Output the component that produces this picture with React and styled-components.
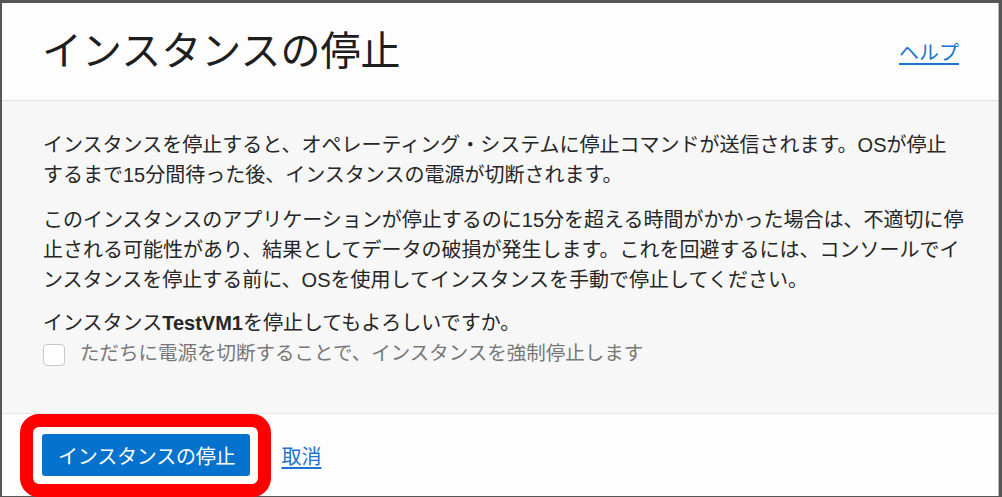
import React from "react";
import styled, { createGlobalStyle } from "styled-components";

const GlobalStyle = createGlobalStyle`
  html, body {
    margin: 0;
    padding: 0;
    background: #565656;
  }
  body {
    font-family: "Liberation Sans", "Noto Sans CJK JP", sans-serif;
  }
`;

const Page = styled.div`
  width: 1002px;
  height: 497px;
  padding: 3px 3px 0 2px;
  box-sizing: border-box;
  overflow: hidden;
`;

const Dialog = styled.div`
  display: flex;
  flex-direction: column;
  height: 493px;
  background: #fdfdfd;
  border-right: 1px solid #b9b9b9;
`;

const Header = styled.div`
  display: flex;
  align-items: center;
  justify-content: space-between;
  height: 97px;
  padding: 0 39px 0 40px;
  border-bottom: 1px solid #e3e3e3;
  background: #fdfdfd;
`;

const Title = styled.h1`
  margin: 0;
  font-size: 40px;
  font-weight: 400;
  color: #1e1e1e;
  line-height: 1;
  padding-bottom: 2px;
`;

const Link = styled.a`
  color: ${(p) => p.$color || "#1a73d1"};
  font-size: 20px;
  text-decoration: underline;
  text-underline-offset: 3px;
  cursor: pointer;
`;

const Body = styled.div`
  flex: 1;
  background: #f7f7f7;
  padding: 29px 40px 0 41px;
  border-bottom: 1px solid #e6e6e6;
  color: #262626;
  font-size: 20px;
  line-height: 30px;
`;

const Para = styled.p`
  margin: 0 0 ${(p) => p.$gap ?? 15}px;
  white-space: nowrap;
`;

const CheckRow = styled.label`
  display: flex;
  align-items: center;
  gap: 15px;
  height: 30px;
  color: #777;
  font-size: 19.5px;
`;

const Box = styled.span`
  flex: none;
  width: 20px;
  height: 20px;
  border: 1px solid #c8c8c8;
  border-radius: 4px;
  background: #fff;
  margin-top: 3px;
`;

const Footer = styled.div`
  display: flex;
  align-items: center;
  gap: 31px;
  height: 82px;
  padding: 0 0 0 40px;
  background: #fdfdfd;
`;

const ButtonWrap = styled.div`
  position: relative;
  display: flex;
`;

const Highlight = styled.span`
  position: absolute;
  top: -20px;
  left: -22px;
  right: -21px;
  bottom: -21px;
  border: 13px solid #fe0000;
  border-radius: 19px;
  pointer-events: none;
`;

const PrimaryButton = styled.button`
  height: 42px;
  padding: 0 15px 0 16px;
  border: none;
  border-radius: 3px;
  background: #0572ce;
  color: #fff;
  font-family: inherit;
  font-size: 20px;
  letter-spacing: -0.2px;
`;

export default function App() {
  return (
    <>
      <GlobalStyle />
      <Page>
        <Dialog>
          <Header>
            <Title>インスタンスの停止</Title>
            <Link>ヘルプ</Link>
          </Header>
          <Body>
            <Para>
              インスタンスを停止すると、オペレーティング・システムに停止コマンドが送信されます。OSが停止
              <br />
              するまで15分間待った後、インスタンスの電源が切断されます。
            </Para>
            <Para $gap={13}>
              このインスタンスのアプリケーションが停止するのに15分を超える時間がかかった場合は、不適切に停
              <br />
              止される可能性があり、結果としてデータの破損が発生します。これを回避するには、コンソールでイ
              <br />
              ンスタンスを停止する前に、OSを使用してインスタンスを手動で停止してください。
            </Para>
            <Para $gap={0}>
              インスタンス<b>TestVM1</b>を停止してもよろしいですか。
            </Para>
            <CheckRow>
              <Box />
              ただちに電源を切断することで、インスタンスを強制停止します
            </CheckRow>
          </Body>
          <Footer>
            <ButtonWrap>
              <PrimaryButton>インスタンスの停止</PrimaryButton>
              <Highlight />
            </ButtonWrap>
            <Link $color="#1a73d1">取消</Link>
          </Footer>
        </Dialog>
      </Page>
    </>
  );
}
